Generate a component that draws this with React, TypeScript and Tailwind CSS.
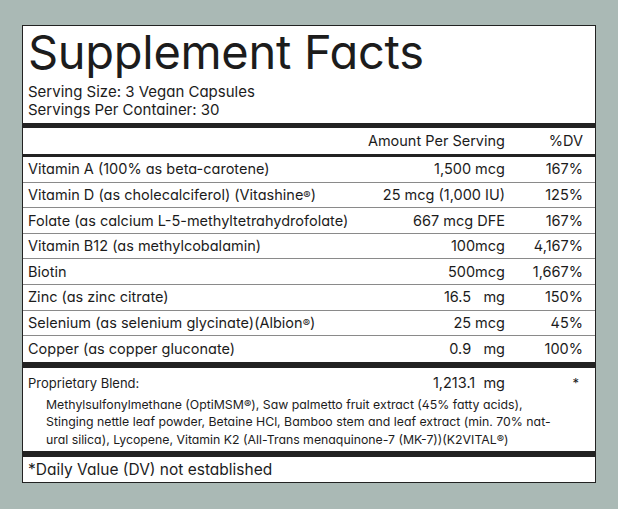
import React from 'react';

interface Nutrient {
  name: React.ReactNode;
  amount: string;
  dv: string;
}

const Reg = () => <sup className="text-[11px] relative -top-[1px]">®</sup>;

const nutrients: Nutrient[] = [
  { name: 'Vitamin A (100% as beta-carotene)', amount: '1,500 mcg', dv: '167%' },
  { name: <>Vitamin D (as cholecalciferol) (Vitashine<Reg />)</>, amount: '25 mcg (1,000 IU)', dv: '125%' },
  { name: 'Folate (as calcium L-5-methyltetrahydrofolate)', amount: '667 mcg DFE', dv: '167%' },
  { name: 'Vitamin B12 (as methylcobalamin)', amount: '100mcg', dv: '4,167%' },
  { name: 'Biotin', amount: '500mcg', dv: '1,667%' },
  { name: 'Zinc (as zinc citrate)', amount: '16.5\u00a0\u00a0 mg', dv: '150%' },
  { name: <>Selenium (as selenium glycinate)(Albion<Reg />)</>, amount: '25 mcg', dv: '45%' },
  { name: 'Copper (as copper gluconate)', amount: '0.9\u00a0\u00a0 mg', dv: '100%' },
];

const font = "font-['Inter','Liberation_Sans',sans-serif] [font-feature-settings:'cv11','cv02']";

export default function App() {
  return (
    <div className={`w-[618px] h-[509px] bg-[#aab9b5] pt-[25px] pl-[22px] text-[#1c1c1c] ${font}`}>
      <div className="w-[574px] border-[1.5px] border-[#222] bg-white">
        {/* heading */}
        <div className="h-[97px] pl-[5px] pt-[1px]">
          <h1 className="text-[47px] leading-[50px] tracking-[-0.3px]">Supplement Facts</h1>
          <p className="text-[15px] leading-[17.5px] mt-[6px]">Serving Size: 3 Vegan Capsules</p>
          <p className="text-[15px] leading-[17.5px]">Servings Per Container: 30</p>
        </div>
        <div className="h-[5px] bg-[#222]" />

        <div className="h-[26px] grid grid-cols-[1fr_auto_78px] items-center pl-[5px] pr-[12px] text-[14.5px]">
          <span />
          <span className="text-right">Amount Per Serving</span>
          <span className="text-right">%DV</span>
        </div>
        <div className="h-[3px] bg-[#222]" />

        {nutrients.map((n, i) => (
          <div
            key={i}
            className={`h-[25.6px] grid grid-cols-[1fr_auto_78px] items-center pl-[5px] pr-[12px] text-[14.5px] ${
              i < nutrients.length - 1 ? 'border-b border-[#8a8a8a]' : ''
            }`}
          >
            <span className="whitespace-nowrap">{n.name}</span>
            <span className="text-right whitespace-pre">{n.amount}</span>
            <span className="text-right">{n.dv}</span>
          </div>
        ))}
        <div className="h-[6px] bg-[#222]" />

        {/* proprietary blend */}
        <div className="h-[83px] pl-[5px] pr-[12px] pt-[6px]">
          <div className="grid grid-cols-[1fr_auto_78px] items-center text-[13px] leading-[18px]">
            <span>Proprietary Blend:</span>
            <span className="text-right text-[14.5px] whitespace-pre">1,213.1{'\u00a0\u00a0'}mg</span>
            <span className="text-right pr-[4px]">*</span>
          </div>
          <p className="pl-[18px] mt-[4px] text-[12.3px] leading-[17.5px] whitespace-nowrap">
            Methylsulfonylmethane (OptiMSM<Reg />), Saw palmetto fruit extract (45% fatty acids),
            <br />
            Stinging nettle leaf powder, Betaine HCl, Bamboo stem and leaf extract (min. 70% nat-
            <br />
            ural silica), Lycopene, Vitamin K2 (All-Trans menaquinone-7 (MK-7))(K2VITAL<Reg />)
          </p>
        </div>
        <div className="h-[6px] bg-[#222]" />

        <div className="h-[25px] pl-[5px] flex items-center text-[15.5px]">
          *Daily Value (DV) not established
        </div>
      </div>
    </div>
  );
}
